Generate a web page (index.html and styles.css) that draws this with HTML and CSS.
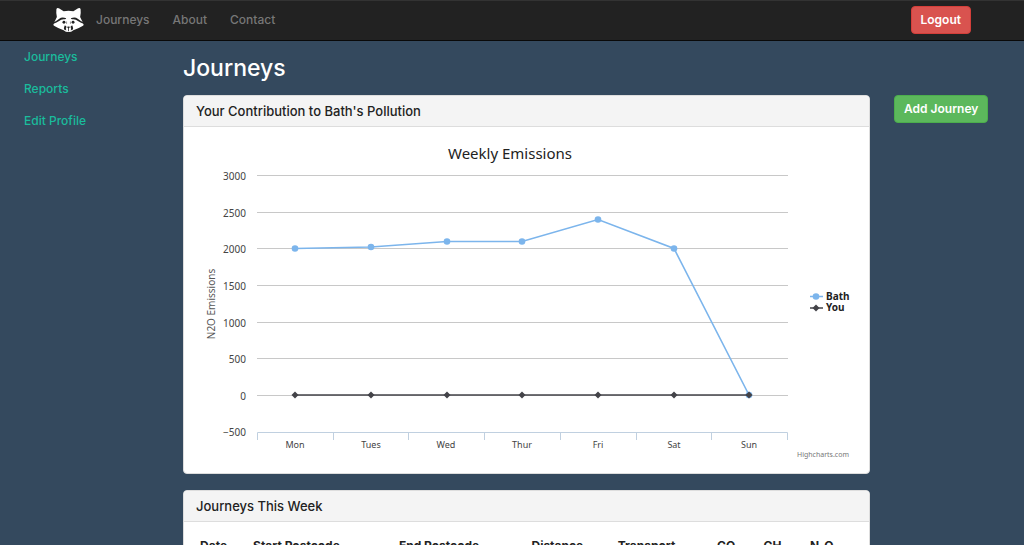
FILE: index.html
```html
<!DOCTYPE html>
<html lang="en">
<head>
<meta charset="utf-8">
<meta name="viewport" content="width=device-width, initial-scale=1">
<title>Journeys</title>
<link rel="stylesheet" href="styles.css">
</head>
<body>
<header class="navbar">
  <a class="brand" href="#" aria-label="Home">
    <svg class="logo" viewBox="0 0 32 26" aria-hidden="true">
      <path class="fur" d="M3.500 2Q4 0 6.500 1L11 4Q16 3 21 4L25.500 1Q28 0 28.500 2Q29 6 28 10L31.500 17Q32 18.500 30.500 19.200Q26 22 21 23.500Q19 25.500 16 25.500Q13 25.500 11 23.500Q6 22 1.500 19.200Q0 18.500 .5 17L4 10Q3 6 3.500 2Z"/>
      <path class="mark" d="M0 15.800Q4 13.600 6.500 11.600Q9.500 9.300 13.600 11.300Q13.400 12.500 11.500 12.200Q8.500 12 6.300 14Q4 15.800 0 17ZM32 15.800Q28 13.600 25.500 11.600Q22.500 9.300 18.400 11.300Q18.600 12.500 20.500 12.200Q23.500 12 25.700 14Q28 15.800 32 17Z"/>
      <circle class="mark" cx="11.300" cy="15.300" r="1.500"/>
      <circle class="mark" cx="20.700" cy="15.300" r="1.500"/>
      <path class="ridge" d="M14 14.500V17M18 14.500V17"/>
      <path class="mark" d="M12 18.800Q14.500 19.300 13.600 21.300Q12.500 22.700 14 23.600Q11.200 24 11.200 21.500ZM20 18.800Q17.500 19.300 18.400 21.300Q19.500 22.700 18 23.600Q20.800 24 20.800 21.500ZM14.600 20Q16 19.200 17.400 20Q17.200 21.300 16.400 21.500V24.500H15.600V21.500Q14.800 21.300 14.600 20Z"/>
    </svg>
  </a>
  <nav class="menu" aria-label="Main">
    <a href="#">Journeys</a>
    <a href="#">About</a>
    <a href="#">Contact</a>
  </nav>
  <button class="button logout" type="button">Logout</button>
</header>

<div class="layout">
  <nav class="sidebar" aria-label="Account">
    <a href="#">Journeys</a>
    <a href="#">Reports</a>
    <a href="#">Edit Profile</a>
  </nav>

  <main>
    <h1>Journeys</h1>
    <section class="panel">
      <h2>Your Contribution to Bath's Pollution</h2>
      <svg class="chart" viewBox="0 0 685 346" role="img" aria-label="Weekly Emissions">
        <text class="title" x="326" y="32">Weekly Emissions</text>
        <path class="grid" d="M73 48.500H604M73 85.500H604M73 121.500H604M73 158.500H604M73 195.500H604M73 231.500H604M73 268.500H604"/>
        <path class="axis" d="M73.500 313V305.500H603.500V313M149.500 305V313M224.500 305V313M300.500 305V313M376.500 305V313M452.500 305V313M527.500 305V313"/>
        <g class="y-labels">
          <text x="62" y="53">3000</text>
          <text x="62" y="90">2500</text>
          <text x="62" y="126">2000</text>
          <text x="62" y="163">1500</text>
          <text x="62" y="200">1000</text>
          <text x="62" y="236">500</text>
          <text x="62" y="273">0</text>
          <text x="62" y="309">−500</text>
        </g>
        <text class="axis-title" transform="translate(31 177) rotate(-90)">N2O Emissions</text>
        <g class="x-labels">
          <text x="111" y="321">Mon</text>
          <text x="187" y="321">Tues</text>
          <text x="262" y="321">Wed</text>
          <text x="338" y="321">Thur</text>
          <text x="414" y="321">Fri</text>
          <text x="490" y="321">Sat</text>
          <text x="565" y="321">Sun</text>
        </g>
        <defs>
          <circle id="dot" r="3.300"/>
          <path id="diamond" d="M0-3.500L3.500 0L0 3.500L-3.500 0Z"/>
        </defs>
        <g class="bath">
          <polyline points="111,121.500 187,120 263,114.500 338,114.500 414,92.500 490,121.500 565,268"/>
          <use href="#dot" x="111" y="121.500"/><use href="#dot" x="187" y="120"/><use href="#dot" x="263" y="114.500"/><use href="#dot" x="338" y="114.500"/><use href="#dot" x="414" y="92.500"/><use href="#dot" x="490" y="121.500"/><use href="#dot" x="565" y="268"/>
          <path d="M626 169.500H639"/><use href="#dot" x="632" y="169.500"/>
        </g>
        <g class="you">
          <polyline points="111,268 565,268"/>
          <use href="#diamond" x="111" y="268"/><use href="#diamond" x="187" y="268"/><use href="#diamond" x="263" y="268"/><use href="#diamond" x="338" y="268"/><use href="#diamond" x="414" y="268"/><use href="#diamond" x="490" y="268"/><use href="#diamond" x="565" y="268"/>
          <path d="M626 181H639"/><use href="#diamond" x="632" y="181"/>
        </g>
        <text class="legend" x="642" y="173">Bath</text>
        <text class="legend" x="642" y="184">You</text>
        <text class="credits" x="665" y="330">Highcharts.com</text>
      </svg>
    </section>

    <section class="panel">
      <h2>Journeys This Week</h2>
      <div class="panel-body">
        <table class="journeys">
          <thead>
            <tr>
              <th class="date" scope="col">Date</th>
              <th class="start" scope="col">Start Postcode</th>
              <th class="end" scope="col">End Postcode</th>
              <th class="distance" scope="col">Distance</th>
              <th class="transport" scope="col">Transport</th>
              <th class="gas" scope="col">CO<sub>2</sub></th>
              <th class="gas" scope="col">CH<sub>4</sub></th>
              <th scope="col">N<sub>2</sub>O</th>
            </tr>
          </thead>
        </table>
      </div>
    </section>
  </main>

  <aside class="actions">
    <button class="button add" type="button">Add Journey</button>
  </aside>
</div>
</body>
</html>
```
FILE: styles.css
```css
* {
  box-sizing: border-box;
}

html {
  scrollbar-width: none;
}

body {
  margin: 0;
  background: #34495e;
  color: #222;
  font-family: Inter, "Open Sans", sans-serif;
  font-size: 12px;
  line-height: 16px;
}

a {
  text-decoration: none;
}

.navbar {
  display: flex;
  align-items: center;
  min-height: 41px;
  padding: 0 53px 1px;
  background: #222;
  border-top: 1px solid #333;
  border-bottom: 1px solid #090909;
}

.logo {
  display: block;
  width: 31px;
  height: 26px;
}

.fur {
  fill: #fff;
}

.mark {
  fill: #222;
}

.ridge {
  fill: none;
  stroke: #999;
  stroke-width: 1;
}

.menu {
  display: flex;
  flex: 1;
  gap: 23px;
  padding-left: 12px;
}

.menu a {
  color: #777;
  font-weight: 500;
}

.button {
  height: 28px;
  padding: 0 9px;
  border: 1px solid;
  border-radius: 4px;
  color: #fff;
  font: 600 12px/16px Inter, "Open Sans", sans-serif;
  white-space: nowrap;
}

.logout {
  background: #d9534f;
  border-color: #d43f3a;
}

.add {
  background: #5cb85c;
  border-color: #4cae4c;
}

.layout {
  display: grid;
  grid-template-columns: 135px minmax(0, 1fr) 106px;
  column-gap: 24px;
  padding: 1px 24px 0;
}

.sidebar {
  display: flex;
  flex-direction: column;
  gap: 16px;
  padding-top: 7px;
}

.sidebar a {
  color: #1abc9c;
  font-weight: 500;
}

h1 {
  margin: 12px 0 13px;
  color: #fff;
  font-size: 23px;
  font-weight: 500;
  line-height: 28px;
}

.panel {
  margin-bottom: 16px;
  overflow: hidden;
  background: #fff;
  border: 1px solid #ddd;
  border-radius: 4px;
}

h2 {
  margin: 0;
  padding: 7px 12px;
  background: #f4f4f4;
  border-bottom: 1px solid #ddd;
  font-size: 13px;
  font-weight: 500;
  line-height: 16px;
}

.panel-body {
  padding: 11px;
}

.actions {
  padding-top: 53px;
}

.chart {
  display: block;
  width: 100%;
  font-family: "Noto Sans", "Open Sans", sans-serif;
}

.title {
  fill: #222;
  font-size: 15px;
  text-anchor: middle;
}

.grid {
  stroke: #c8c8c8;
}

.axis {
  fill: none;
  stroke: #c0d0e0;
}

.y-labels,
.x-labels {
  fill: #444;
  font-size: 9px;
}

.y-labels {
  font-size: 10px;
  text-anchor: end;
}

.x-labels,
.axis-title {
  text-anchor: middle;
}

.axis-title {
  fill: #555;
  font-size: 10px;
}

.bath {
  fill: #7cb5ec;
  stroke: #7cb5ec;
}

.you {
  fill: #434348;
  stroke: #434348;
}

.bath polyline,
.you polyline {
  fill: none;
  stroke-width: 1.6;
}

.bath path,
.you path {
  stroke-width: 1.6;
}

.bath use,
.you use {
  stroke: none;
}

.legend {
  fill: #222;
  font-size: 10px;
  font-weight: 700;
}

.credits {
  fill: #777;
  font-size: 7px;
  text-anchor: end;
}

.journeys {
  width: 100%;
  border-collapse: collapse;
  table-layout: fixed;
}

.journeys th {
  padding: 5px;
  border-bottom: 2px solid #ddd;
  font-weight: 700;
  text-align: left;
  white-space: nowrap;
}

.journeys sub {
  font-size: 8px;
  line-height: 0;
}

.date {
  width: 8%;
}

.start {
  width: 22%;
}

.end {
  width: 20%;
}

.distance {
  width: 13%;
}

.transport {
  width: 15%;
}

.gas {
  width: 7%;
}
```
